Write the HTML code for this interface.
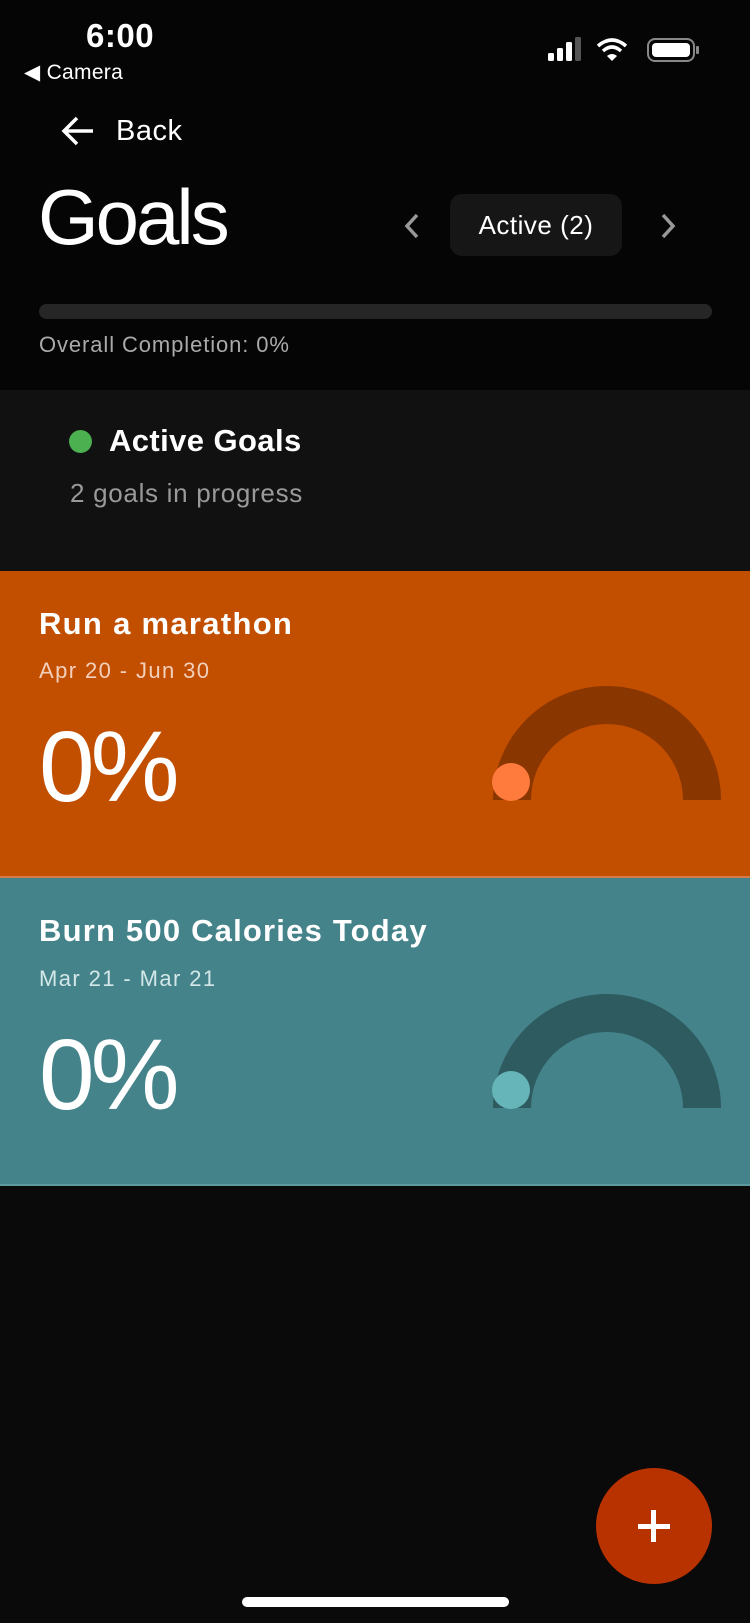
<!DOCTYPE html>
<html><head><meta charset="utf-8"><style>
*{margin:0;padding:0;box-sizing:border-box}
body{width:750px;height:1623px;background:#0a0a0a;font-family:"Liberation Sans",sans-serif;color:#fff;position:relative;overflow:hidden}
.a{position:absolute;white-space:nowrap}
</style></head><body>
<div class="a" style="left:0;top:0;width:750px;height:390px;background:#050505"></div>
<div class="a" style="left:86px;top:17px;font-size:33px;font-weight:bold;letter-spacing:0.5px">6:00</div>
<div class="a" style="left:24px;top:60px;font-size:21px;letter-spacing:0.3px">&#9664;&#xFE0E; Camera</div>
<svg class="a" style="left:546px;top:36px" width="156" height="28" viewBox="0 0 156 28">
<rect x="2" y="17" width="6" height="8" rx="1.5" fill="#fff"/><rect x="11" y="12" width="6" height="13" rx="1.5" fill="#fff"/><rect x="20" y="6" width="6" height="19" rx="1.5" fill="#fff"/><rect x="29" y="1" width="6" height="24" rx="1.5" fill="#555"/>
<path d="M52 10 Q66 -2 80 10" stroke="#fff" stroke-width="3.5" fill="none"/><path d="M57 15 Q66 7 75 15" stroke="#fff" stroke-width="3.5" fill="none"/><path d="M61 20 L66 25 L71 20 Q66 16 61 20Z" fill="#fff"/>
<rect x="102" y="3" width="46" height="22" rx="7" fill="none" stroke="#888" stroke-width="2"/><rect x="106" y="7" width="38" height="14" rx="4" fill="#fff"/><rect x="150" y="10" width="3" height="8" rx="1" fill="#888"/>
</svg>
<svg class="a" style="left:60px;top:115px" width="36" height="32" viewBox="0 0 36 32"><path d="M33 16H4M17 3L4 16l13 13" stroke="#fff" stroke-width="3.5" fill="none"/></svg>
<div class="a" style="left:116px;top:115px;font-size:29px;letter-spacing:0.5px">Back</div>
<div class="a" style="left:38px;top:172px;font-size:78px;letter-spacing:-3px">Goals</div>
<svg class="a" style="left:402px;top:212px" width="20" height="28" viewBox="0 0 20 28"><path d="M15 3L5 14l10 11" stroke="#999" stroke-width="3.5" fill="none"/></svg>
<div class="a" style="left:450px;top:194px;width:172px;height:62px;background:#161616;border-radius:12px;font-size:26px;letter-spacing:0.5px;line-height:62px;text-align:center">Active (2)</div>
<svg class="a" style="left:658px;top:212px" width="20" height="28" viewBox="0 0 20 28"><path d="M5 3l10 11L5 25" stroke="#999" stroke-width="3.5" fill="none"/></svg>
<div class="a" style="left:39px;top:304px;width:673px;height:15px;background:#262626;border-radius:8px"></div>
<div class="a" style="left:39px;top:332px;font-size:22px;letter-spacing:0.9px;color:#aaa">Overall Completion: 0%</div>
<div class="a" style="left:0;top:390px;width:750px;height:181px;background:#111"></div>
<div class="a" style="left:69px;top:430px;width:23px;height:23px;border-radius:50%;background:#4caf50"></div>
<div class="a" style="left:109px;top:423px;font-size:31px;font-weight:bold;letter-spacing:0.4px">Active Goals</div>
<div class="a" style="left:70px;top:478px;font-size:26px;letter-spacing:0.7px;color:#9a9a9a">2 goals in progress</div>

<div class="a" style="left:0;top:571px;width:750px;height:305px;background:#c24e00"></div>
<div class="a" style="left:0;top:876px;width:750px;height:2px;background:#d57a4a"></div>
<div class="a" style="left:39px;top:606px;font-size:31px;font-weight:bold;letter-spacing:1.3px">Run a marathon</div>
<div class="a" style="left:39px;top:658px;font-size:22px;letter-spacing:1.4px;color:#f3d0bb">Apr 20 - Jun 30</div>
<div class="a" style="left:39px;top:710px;font-size:100px;font-weight:300;letter-spacing:-4px">0%</div>
<svg class="a" style="left:480px;top:670px" width="270" height="140"><path d="M32 130 A95 95 0 0 1 222 130" stroke="#8a3600" stroke-width="38" fill="none"/><circle cx="31" cy="112" r="19" fill="#ff7a3d"/></svg>

<div class="a" style="left:0;top:878px;width:750px;height:306px;background:#44838a"></div>
<div class="a" style="left:0;top:1184px;width:750px;height:2px;background:#5d9aa0"></div>
<div class="a" style="left:39px;top:913px;font-size:31px;font-weight:bold;letter-spacing:1.2px">Burn 500 Calories Today</div>
<div class="a" style="left:39px;top:966px;font-size:22px;letter-spacing:1.4px;color:#d3e7e8">Mar 21 - Mar 21</div>
<div class="a" style="left:39px;top:1018px;font-size:100px;font-weight:300;letter-spacing:-4px">0%</div>
<svg class="a" style="left:480px;top:978px" width="270" height="140"><path d="M32 130 A95 95 0 0 1 222 130" stroke="#2e5b60" stroke-width="38" fill="none"/><circle cx="31" cy="112" r="19" fill="#66b5b8"/></svg>

<div class="a" style="left:596px;top:1468px;width:116px;height:116px;border-radius:50%;background:#b83200"></div>
<div class="a" style="left:638px;top:1524px;width:32px;height:5px;background:#fff"></div>
<div class="a" style="left:651px;top:1510px;width:5px;height:32px;background:#fff"></div>
<div class="a" style="left:242px;top:1597px;width:267px;height:10px;border-radius:5px;background:#fff"></div>
</body></html>
